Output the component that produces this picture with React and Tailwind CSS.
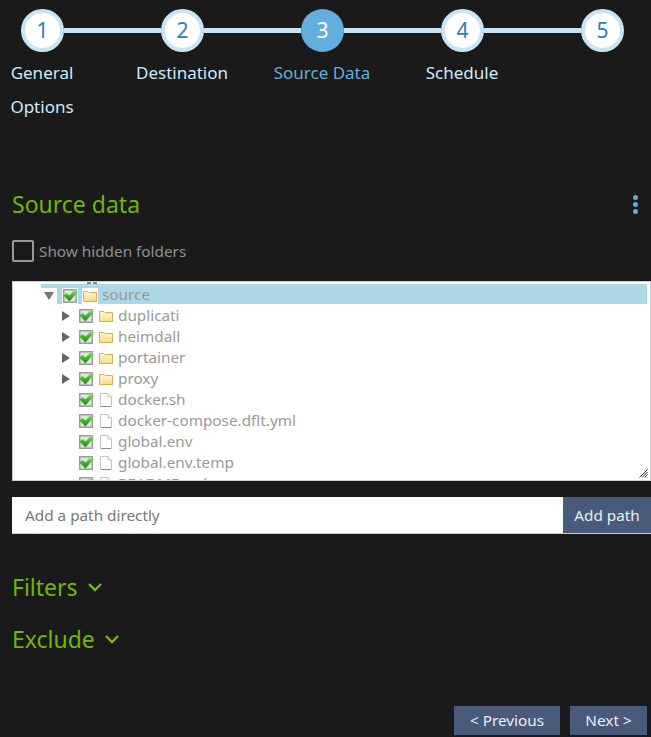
import React from 'react';

const STEPS = [
  { n: 1, label: ['General', 'Options'] },
  { n: 2, label: ['Destination'] },
  { n: 3, label: ['Source Data'], active: true },
  { n: 4, label: ['Schedule'] },
  { n: 5, label: [''] },
];

const TREE = [
  { name: 'duplicati', folder: true },
  { name: 'heimdall', folder: true },
  { name: 'portainer', folder: true },
  { name: 'proxy', folder: true },
  { name: 'docker.sh' },
  { name: 'docker-compose.dflt.yml' },
  { name: 'global.env' },
  { name: 'global.env.temp' },
  { name: 'README.md' },
];

function Check() {
  return (
    <svg width="16" height="16" viewBox="0 0 16 16" className="shrink-0">
      <defs>
        <linearGradient id="tick" x1="0" y1="0" x2="0" y2="1">
          <stop offset="0" stopColor="#a5e585" />
          <stop offset="0.45" stopColor="#45bb2e" />
          <stop offset="1" stopColor="#1f8a12" />
        </linearGradient>
      </defs>
      <rect x="1.75" y="1.75" width="12.5" height="12.5" fill="#e4e4e4" stroke="#9c9c9c" strokeWidth="1.5" />
      <polygon points="1.5,7.5 4.5,5 7.5,7.5 13,1.5 16,3.5 7.5,13.5" fill="url(#tick)" />
    </svg>
  );
}

function Folder() {
  return (
    <svg width="16" height="16" viewBox="0 0 16 16" className="shrink-0">
      <defs>
        <linearGradient id="folder" x1="0" y1="0" x2="0" y2="1">
          <stop offset="0" stopColor="#fff8dc" />
          <stop offset="1" stopColor="#f8dc7c" />
        </linearGradient>
      </defs>
      <path d="M1.5 13.5 V3.5 H6 L7 4.5 H14.5 V13.5 Z" fill="url(#folder)" stroke="#e8a94a" strokeWidth="1" />
    </svg>
  );
}

function File() {
  return (
    <svg width="16" height="16" viewBox="0 0 16 16" className="shrink-0">
      <path d="M2.5 1.5 H10 L13.5 5 V14.5 H2.5 Z" fill="#fff" stroke="#c4c4c4" strokeWidth="1" />
      <path d="M10 1.5 V5 H13.5" fill="#f2f2f2" stroke="#c4c4c4" strokeWidth="1" />
      <path d="M3 14.5 H13" stroke="#8c8c8c" strokeWidth="1" />
    </svg>
  );
}

function Row({ item }) {
  return (
    <div className="flex items-center h-[21px] pl-[62px] shrink-0">
      <div className="w-[16px] shrink-0">
        {item.folder && <div className="w-0 h-0 border-y-[5px] border-y-transparent border-l-[8px] border-l-[#666]" />}
      </div>
      <Check />
      <div className="w-[4px] shrink-0" />
      {item.folder ? <Folder /> : <File />}
      <span className="ml-[4px] text-[#999]">{item.name}</span>
    </div>
  );
}

function Chevron() {
  return (
    <svg width="16" height="10" viewBox="0 0 16 10" className="ml-[9px]">
      <path d="M2 2 L8 8 L14 2" fill="none" stroke="#7ab51d" strokeWidth="2.4" />
    </svg>
  );
}

export default function App() {
  return (
    <div className="w-[651px] h-[737px] overflow-hidden bg-[#1a1a1a] text-[15.3px]" style={{ fontFamily: '"Noto Sans", sans-serif' }}>
      {/* Steps */}
      <div className="flex items-center pl-[21px] pt-[9px]">
        {STEPS.map((s, i) => (
          <React.Fragment key={s.n}>
            <div
              className={`w-[43px] h-[43px] rounded-full flex items-center justify-center text-[21px] shrink-0 ${
                s.active
                  ? 'bg-[#62aedd] text-white'
                  : 'bg-white border-[4px] border-[#c9e5f5] text-[#2a80b9]'
              }`}
            >
              {s.n}
            </div>
            {i < 4 && <div className="w-[97px] h-[5px] bg-[#c9e5f5]" />}
          </React.Fragment>
        ))}
      </div>
      <div className="grid grid-cols-[repeat(5,140px)] -ml-[28px] mt-[4px] text-[17px]">
        {STEPS.map((s) => (
          <div key={s.n} className={`text-center leading-[34px] ${s.active ? 'text-[#62aedd]' : 'text-[#cfeafc]'}`}>
            {s.label.map((l) => <div key={l}>{l}</div>)}
          </div>
        ))}
      </div>

      {/* Source data */}
      <div className="flex items-center justify-between pl-[12px] pr-[13px] mt-[65px]">
        <h2 className="text-[23px] leading-[30px] text-[#6fb800]">Source data</h2>
        <div className="flex flex-col gap-[2px]">
          <span className="w-[5px] h-[5px] rounded-full bg-[#5fabdc]" />
          <span className="w-[5px] h-[5px] rounded-full bg-[#5fabdc]" />
          <span className="w-[5px] h-[5px] rounded-full bg-[#5fabdc]" />
        </div>
      </div>

      <label className="flex items-center pl-[12px] mt-[21px] h-[22px] text-[#909090]">
        <span className="w-[22px] h-[22px] rounded-[2px] border-2 border-[#999] shrink-0" />
        <span className="ml-[5px]">Show hidden folders</span>
      </label>

      {/* Tree */}
      <div className="relative ml-[12px] mt-[19px] h-[200px] w-[639px] bg-white border border-[#ccc] overflow-hidden">
        <div className="-ml-[13px] flex flex-col">
          <div className="h-[2px] pl-[87px] flex gap-[2px] shrink-0">
            <span className="w-[4px] h-[2px] bg-[#888]" />
            <span className="w-[4px] h-[2px] bg-[#888]" />
          </div>
          <div className="flex items-end h-[20px] ml-[41px] mr-[3px] pb-0 bg-[#add8e6] shrink-0">
            <div className="w-[16px] h-[16px] bg-white flex items-center justify-center shrink-0">
              <div className="w-0 h-0 border-x-[5px] border-x-transparent border-t-[8px] border-t-[#777]" />
            </div>
            <div className="w-[5px] shrink-0" />
            <div className="bg-white shrink-0"><Check /></div>
            <div className="w-[4px] shrink-0" />
            <div className="bg-white shrink-0"><Folder /></div>
            <span className="ml-[4px] leading-[20px] self-center text-[#999]">source</span>
          </div>
          <div className="h-[1px] shrink-0" />
          {TREE.map((item) => <Row key={item.name} item={item} />)}
        </div>
        <svg width="9" height="9" viewBox="0 0 9 9" className="absolute right-[2px] bottom-[2px]">
          <path d="M0.5 8.5 L8.5 0.5 M3 8.5 L8.5 3 M5.5 8.5 L8.5 5.5 M8 8.5 L8.5 8" stroke="#333" strokeWidth="1" fill="none" />
        </svg>
      </div>

      {/* Add path */}
      <div className="flex h-[37px] mt-[16px] ml-[12px] border-b border-[#ccc]">
        <input readOnly placeholder="Add a path directly" className="flex-1 min-w-0 bg-white pl-[13px] placeholder:text-[#777] outline-none" />
        <button className="w-[88px] bg-[#4a5a7b] text-[#e8eef6]">Add path</button>
      </div>

      {/* Collapsed sections */}
      <div className="flex items-center pl-[12px] mt-[38px] h-[30px] text-[23px] text-[#6fb800]">
        Filters
        <Chevron />
      </div>
      <div className="flex items-center pl-[12px] mt-[22px] h-[30px] text-[23px] text-[#6fb800]">
        Exclude
        <Chevron />
      </div>

      {/* Nav */}
      <div className="flex justify-end gap-[10px] pr-[4px] mt-[52px]">
        <button className="w-[106px] h-[29px] bg-[#4a5a7b] text-[#e8eef6]">&lt; Previous</button>
        <button className="w-[77px] h-[29px] bg-[#4a5a7b] text-[#e8eef6]">Next &gt;</button>
      </div>
    </div>
  );
}
